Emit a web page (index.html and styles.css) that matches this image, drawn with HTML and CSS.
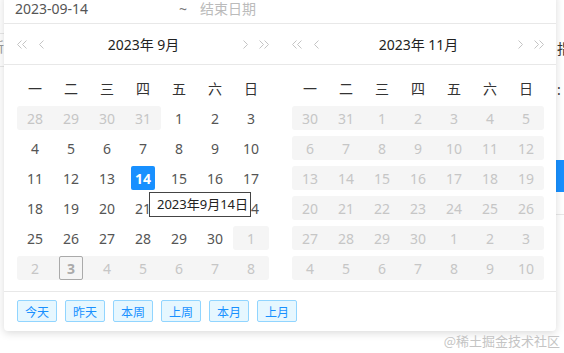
FILE: index.html
```html
<!DOCTYPE html>
<html lang="zh-CN">
<head>
    <meta charset="UTF-8">
    <title>日期范围</title>
    <link rel="stylesheet" href="styles.css">
</head>
<body>
    <div class="page">
        <div class="edge edge-left">
            <div class="edge-bar"></div>
            <div class="edge-label"><span>最近更新</span></div>
        </div>
        <div class="edge edge-right">
            <div class="edge-text edge-text-top">指标</div>
            <div class="edge-text edge-text-mid">:</div>
            <div class="edge-btn"></div>
            <div class="edge-line"></div>
        </div>
    </div>

    <div class="picker">
        <div class="picker-input">
            <span class="input-value">2023-09-14</span>
            <span class="input-sep">~</span>
            <span class="input-placeholder">结束日期</span>
        </div>

        <div class="months">
            <div class="month month-left">
                <div class="month-head">
                    <span class="nav nav-wide"><svg width="10" height="9" viewBox="0 0 10 9"><path d="M4.5 .5L.5 4.5l4 4M9.5 .5l-4 4 4 4"/></svg></span>
                    <span class="nav"><svg width="5" height="9" viewBox="0 0 5 9"><path d="M4.5 .5L.5 4.5l4 4"/></svg></span>
                    <span class="month-title">2023年 9月</span>
                    <span class="nav"><svg width="5" height="9" viewBox="0 0 5 9"><path d="M.5 .5l4 4-4 4"/></svg></span>
                    <span class="nav nav-wide"><svg width="10" height="9" viewBox="0 0 10 9"><path d="M.5 .5l4 4-4 4M5.5 .5l4 4-4 4"/></svg></span>
                </div>
                <div class="days">
                    <span class="wd">一</span><span class="wd">二</span><span class="wd">三</span><span class="wd">四</span><span class="wd">五</span><span class="wd">六</span><span class="wd">日</span>

                    <span class="cell off first">28</span><span class="cell off">29</span><span class="cell off">30</span><span class="cell off last">31</span><span class="cell">1</span><span class="cell">2</span><span class="cell">3</span>
                    <span class="cell">4</span><span class="cell">5</span><span class="cell">6</span><span class="cell">7</span><span class="cell">8</span><span class="cell">9</span><span class="cell">10</span>
                    <span class="cell">11</span><span class="cell">12</span><span class="cell">13</span><span class="cell"><b class="selected">14</b></span><span class="cell">15</span><span class="cell">16</span><span class="cell">17</span>
                    <span class="cell">18</span><span class="cell">19</span><span class="cell">20</span><span class="cell">21</span><span class="cell">22</span><span class="cell">23</span><span class="cell">24</span>
                    <span class="cell">25</span><span class="cell">26</span><span class="cell">27</span><span class="cell">28</span><span class="cell">29</span><span class="cell">30</span><span class="cell off first last">1</span>
                    <span class="cell off first">2</span><span class="cell off"><b class="today">3</b></span><span class="cell off">4</span><span class="cell off">5</span><span class="cell off">6</span><span class="cell off">7</span><span class="cell off last">8</span>
                </div>
            </div>

            <div class="month month-right">
                <div class="month-head">
                    <span class="nav nav-wide"><svg width="10" height="9" viewBox="0 0 10 9"><path d="M4.5 .5L.5 4.5l4 4M9.5 .5l-4 4 4 4"/></svg></span>
                    <span class="nav"><svg width="5" height="9" viewBox="0 0 5 9"><path d="M4.5 .5L.5 4.5l4 4"/></svg></span>
                    <span class="month-title">2023年 11月</span>
                    <span class="nav"><svg width="5" height="9" viewBox="0 0 5 9"><path d="M.5 .5l4 4-4 4"/></svg></span>
                    <span class="nav nav-wide"><svg width="10" height="9" viewBox="0 0 10 9"><path d="M.5 .5l4 4-4 4M5.5 .5l4 4-4 4"/></svg></span>
                </div>
                <div class="days days-off">
                    <span class="wd">一</span><span class="wd">二</span><span class="wd">三</span><span class="wd">四</span><span class="wd">五</span><span class="wd">六</span><span class="wd">日</span>

                    <span class="cell">30</span><span class="cell">31</span><span class="cell">1</span><span class="cell">2</span><span class="cell">3</span><span class="cell">4</span><span class="cell">5</span>
                    <span class="cell">6</span><span class="cell">7</span><span class="cell">8</span><span class="cell">9</span><span class="cell">10</span><span class="cell">11</span><span class="cell">12</span>
                    <span class="cell">13</span><span class="cell">14</span><span class="cell">15</span><span class="cell">16</span><span class="cell">17</span><span class="cell">18</span><span class="cell">19</span>
                    <span class="cell">20</span><span class="cell">21</span><span class="cell">22</span><span class="cell">23</span><span class="cell">24</span><span class="cell">25</span><span class="cell">26</span>
                    <span class="cell">27</span><span class="cell">28</span><span class="cell">29</span><span class="cell">30</span><span class="cell">1</span><span class="cell">2</span><span class="cell">3</span>
                    <span class="cell">4</span><span class="cell">5</span><span class="cell">6</span><span class="cell">7</span><span class="cell">8</span><span class="cell">9</span><span class="cell">10</span>
                </div>
            </div>
        </div>

        <div class="picker-foot">
            <button class="preset">今天</button>
            <button class="preset">昨天</button>
            <button class="preset">本周</button>
            <button class="preset">上周</button>
            <button class="preset">本月</button>
            <button class="preset">上月</button>
        </div>
    </div>

    <div class="tooltip">2023年9月14日</div>
    <div class="watermark">@稀土掘金技术社区</div>
</body>
</html>
```

FILE: styles.css
```css
:root {
    --text-color: #555;
    --dark-text: #333;
    --muted-text: #bbb;
    --line-color: #e8e8e8;
    --off-bg: #f5f5f5;
    --primary: #1890ff;
}

body {
    margin: 0;
    background: #fff;
    font-family: "Noto Sans", "Noto Sans CJK SC", sans-serif;
    font-size: 14px;
    color: var(--text-color);
    width: 564px;
    height: 353px;
    overflow: hidden;
    position: relative;
}

/* page behind the popup */
.page {
    display: flex;
    justify-content: space-between;
    height: 353px;
}

.edge {
    overflow: hidden;
}

.edge-left {
    width: 4px;
}

.edge-bar {
    height: 33px;
    border-bottom: 1px solid var(--line-color);
}

.edge-label {
    display: flex;
    justify-content: flex-end;
    height: 32px;
    line-height: 26px;
    border-bottom: 1px solid var(--line-color);
    color: #999;
    white-space: nowrap;
}

.edge-right {
    width: 8px;
    color: #333;
    white-space: nowrap;
}

.edge-text {
    height: 18px;
    line-height: 18px;
    padding-left: 1px;
}

.edge-text-top {
    margin-top: 40px;
}

.edge-text-mid {
    margin-top: 23px;
    padding-left: 1px;
}

.edge-btn {
    margin-top: 61px;
    height: 32px;
    background: var(--primary);
}

.edge-line {
    margin-top: 22px;
    border-top: 1px solid var(--line-color);
}

/* popup */
.picker {
    position: absolute;
    left: 4px;
    top: -7px;
    width: 552px;
    background: #fff;
    border-radius: 4px;
    box-shadow: 0 2px 8px rgba(0, 0, 0, 0.15);
}

.picker-input {
    display: flex;
    align-items: center;
    height: 30px;
    padding-left: 11px;
    border-bottom: 1px solid var(--line-color);
}

.input-value {
    width: 162px;
}

.input-sep {
    width: 12px;
    text-align: center;
    margin-right: 11px;
    color: #777;
}

.input-placeholder {
    color: var(--muted-text);
}

.months {
    display: flex;
}

.month {
    width: 276px;
}

.month-left .month-head,
.month-left .days {
    padding-left: 13px;
    padding-right: 11px;
}

.month-right .month-head,
.month-right .days {
    padding-left: 12px;
    padding-right: 12px;
}

.month-head {
    display: flex;
    align-items: center;
    height: 40px;
    border-bottom: 1px solid var(--line-color);
}

.nav {
    display: flex;
    width: 5px;
}

.nav-wide {
    width: 10px;
}

.nav svg {
    fill: none;
    stroke: #c4c4c4;
    stroke-width: 1;
}

.nav:nth-child(2) {
    margin-left: 12px;
}

.nav:nth-child(5) {
    margin-left: 11px;
}

.month-title {
    flex: 1;
    text-align: center;
    color: #222;
}

.days {
    display: grid;
    grid-template-columns: repeat(7, 36px);
    grid-auto-rows: 24px;
    row-gap: 6px;
    padding-top: 11px;
    padding-bottom: 11px;
}

.wd,
.cell {
    display: flex;
    align-items: center;
    justify-content: center;
}

.wd {
    color: var(--dark-text);
}

.cell.off,
.days-off .cell {
    background: var(--off-bg);
    color: #c6c6c6;
}

.cell.first,
.days-off .cell:nth-child(7n + 1) {
    border-radius: 3px 0 0 3px;
}

.cell.last,
.days-off .cell:nth-child(7n) {
    border-radius: 0 3px 3px 0;
}

.cell.first.last {
    border-radius: 3px;
}

.selected,
.today {
    display: flex;
    align-items: center;
    justify-content: center;
    width: 24px;
    height: 24px;
    box-sizing: border-box;
    border-radius: 2px;
}

.selected {
    background: var(--primary);
    color: #fff;
}

.today {
    border: 1px solid #aaa;
    color: #aaa;
}

.picker-foot {
    display: flex;
    gap: 8px;
    padding: 8px 13px 9px;
    border-top: 1px solid var(--line-color);
}

.preset {
    height: 22px;
    padding: 0 7px;
    font-family: "Noto Sans CJK SC", sans-serif;
    font-size: 12px;
    color: var(--primary);
    background: #e6f7ff;
    border: 1px solid #91d5ff;
    border-radius: 2px;
}

.tooltip {
    position: absolute;
    left: 149px;
    top: 192px;
    width: 102px;
    height: 25px;
    box-sizing: border-box;
    padding-left: 7px;
    line-height: 23px;
    font-size: 13px;
    color: #222;
    background: #fff;
    border: 1px solid #444;
}

.watermark {
    position: absolute;
    right: 4px;
    bottom: 3px;
    font-family: "Noto Sans CJK SC", serif;
    font-size: 13px;
    color: #c4c4c4;
}
```
